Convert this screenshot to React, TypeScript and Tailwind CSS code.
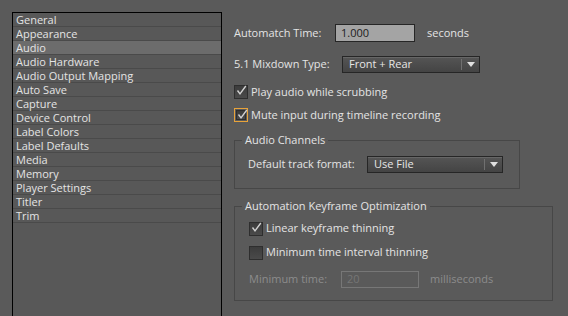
import React from "react";

const sections = [
  "General",
  "Appearance",
  "Audio",
  "Audio Hardware",
  "Audio Output Mapping",
  "Auto Save",
  "Capture",
  "Device Control",
  "Label Colors",
  "Label Defaults",
  "Media",
  "Memory",
  "Player Settings",
  "Titler",
  "Trim",
];

function CheckBox({ checked, focused }: { checked?: boolean; focused?: boolean }) {
  return (
    <span
      className={`relative flex h-[14px] w-[14px] shrink-0 items-center justify-center ${
        focused ? "border border-[#e8a33a] p-px" : "p-0"
      }`}
    >
      <span className="flex h-full w-full items-center justify-center border border-[#2e2e2e] bg-gradient-to-b from-[#3c3c3c] to-[#4a4a4a]">
        {checked && (
          <svg width="11" height="11" viewBox="0 0 11 11" className="absolute left-[2px] top-0">
            <path d="M1.5 5.5 L4 8.8 L9.8 1" fill="none" stroke="#d2d2d2" strokeWidth="1.4" />
          </svg>
        )}
      </span>
    </span>
  );
}

function Select({ value, width }: { value: string; width: string }) {
  return (
    <div
      className={`flex h-[17px] items-center border border-[#262626] bg-gradient-to-b from-[#555555] to-[#444444] shadow-[inset_0_1px_0_#666] ${width}`}
    >
      <span className="flex-1 pl-[6px] text-[#e6e6e6]">{value}</span>
      <span className="h-[11px] w-px bg-[#707070]" />
      <span className="flex w-[17px] justify-center">
        <svg width="8" height="5" viewBox="0 0 8 5">
          <path d="M0 0 H8 L4 5 Z" fill="#e0e0e0" />
        </svg>
      </span>
    </div>
  );
}

export default function App() {
  return (
    <div
      className="flex h-[316px] w-[568px] overflow-hidden bg-[#5a5a5a] text-[11px] text-[#e4e4e4]"
      style={{ fontFamily: '"Open Sans", "DejaVu Sans", sans-serif' }}
    >
      <div className="pl-[12px] pt-[12px]">
        <ul className="h-[320px] w-[210px] border border-black bg-[#585858]">
          {sections.map((s) => (
            <li
              key={s}
              className={`flex h-[14px] items-center border-b border-[#4a4a4a] pl-[3px] leading-none ${
                s === "Audio" ? "bg-[#6c6c6c]" : ""
              }`}
            >
              {s}
            </li>
          ))}
        </ul>
      </div>

      <div className="ml-[12px] flex flex-1 flex-col pt-[24px]">
        <div className="flex h-[18px] items-center">
          <span className="w-[101px]">Automatch Time:</span>
          <div className="flex h-[18px] w-[80px] items-center border border-[#262626] bg-[#a4a4a4] pl-[5px] text-[#1c1c1c]">
            1.000
          </div>
          <span className="ml-[12px]">seconds</span>
        </div>

        <div className="mt-[14px] flex h-[17px] items-center">
          <span className="w-[108px]">5.1 Mixdown Type:</span>
          <Select value="Front + Rear" width="w-[138px]" />
        </div>

        <div className="mt-[12px] flex h-[14px] items-center gap-[3px]">
          <CheckBox checked />
          <span>Play audio while scrubbing</span>
        </div>

        <div className="mt-[9px] flex h-[14px] items-center gap-[3px]">
          <CheckBox checked focused />
          <span>Mute input during timeline recording</span>
        </div>

        <fieldset className="mt-[10px] h-[57px] w-[286px] border border-[#474747] px-[13px]">
          <legend className="ml-[-6px] px-[3px]">Audio Channels</legend>
          <div className="mt-[7px] flex h-[18px] items-center">
            <span className="w-[119px]">Default track format:</span>
            <Select value="Use File" width="w-[136px]" />
          </div>
        </fieldset>

        <fieldset className="mt-[9px] h-[103px] w-[319px] border border-[#474747] px-[14px]">
          <legend className="ml-[-7px] px-[3px]">Automation Keyframe Optimization</legend>
          <div className="mt-[7px] flex h-[14px] items-center gap-[3px]">
            <CheckBox checked />
            <span>Linear keyframe thinning</span>
          </div>
          <div className="mt-[10px] flex h-[14px] items-center gap-[3px]">
            <CheckBox />
            <span>Minimum time interval thinning</span>
          </div>
          <div className="mt-[11px] flex h-[17px] items-center text-[#8c8c8c]">
            <span className="w-[92px]">Minimum time:</span>
            <div className="flex h-[17px] w-[78px] items-center border border-[#777777] pl-[5px] text-[#767676]">
              20
            </div>
            <span className="ml-[11px]">milliseconds</span>
          </div>
        </fieldset>
      </div>
    </div>
  );
}
